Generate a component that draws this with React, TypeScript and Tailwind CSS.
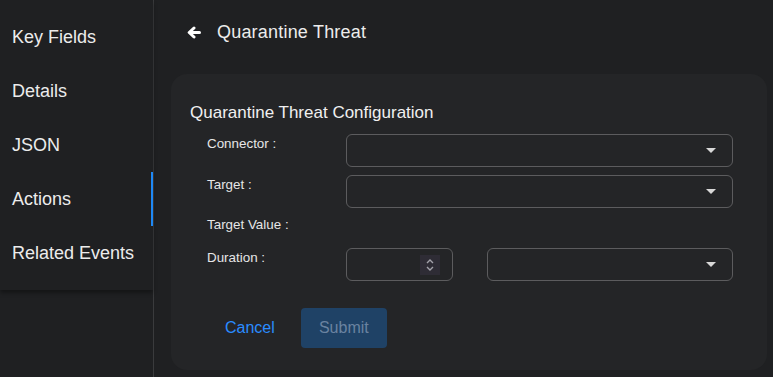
import React from "react";

const navItems = ["Key Fields", "Details", "JSON", "Actions", "Related Events"];

function BackArrow() {
  return (
    <svg width="14" height="13" viewBox="0 0 14 13" className="text-white">
      <path
        d="M7 2 L2.2 6.5 L7 11 M3 6.5 H12.5"
        fill="none"
        stroke="currentColor"
        strokeWidth="3"
        strokeLinecap="round"
        strokeLinejoin="round"
      />
    </svg>
  );
}

function Caret() {
  return (
    <svg width="10" height="5" viewBox="0 0 10 5" className="text-[#d8d8d8]">
      <polygon points="0,0 10,0 5,5" fill="currentColor" />
    </svg>
  );
}

function SelectBox({ className }: { className: string }) {
  return (
    <div
      className={`flex h-[33px] items-center justify-end rounded-[6px] border border-[#5c5c5e] pr-[16px] ${className}`}
    >
      <Caret />
    </div>
  );
}

function Spinner() {
  return (
    <div className="flex h-[20px] w-[20px] flex-col items-center justify-center gap-[2px] bg-[#2e2c35]">
      <svg width="8" height="5" viewBox="0 0 8 5">
        <polyline points="1,4 4,1 7,4" fill="none" stroke="#a3a2aa" strokeWidth="1.4" />
      </svg>
      <svg width="8" height="5" viewBox="0 0 8 5">
        <polyline points="1,1 4,4 7,1" fill="none" stroke="#a3a2aa" strokeWidth="1.4" />
      </svg>
    </div>
  );
}

export default function App() {
  return (
    <div className="flex h-[377px] w-[773px] overflow-hidden bg-[#1f2022] font-['Liberation_Sans',Arial,sans-serif] text-[#ececec]">
      {/* Sidebar */}
      <div className="w-[154px] shrink-0 border-r border-[#3a3b3d]">
        <div className="py-[10px] shadow-[0_3px_4px_rgba(0,0,0,0.35)]">
          {navItems.map((item) => (
            <div
              key={item}
              className={`flex h-[54px] items-center pl-[12px] text-[18px] ${
                item === "Actions" ? "border-r-2 border-[#1e88f5]" : ""
              }`}
            >
              {item}
            </div>
          ))}
        </div>
      </div>

      {/* Main */}
      <div className="flex flex-1 flex-col">
        <div className="flex h-[74px] items-center gap-[16px] pb-[10px] pl-[33px] text-[18px]">
          <BackArrow />
          <span className="tracking-[0.2px]">Quarantine Threat</span>
        </div>

        <div className="ml-[17px] mr-[6px] h-[296px] rounded-[16px] bg-[#242527] pl-[19px] pt-[29px]">
          <div className="text-[17px] leading-[20px] text-[#f0f0f0]">
            Quarantine Threat Configuration
          </div>

          <div className="mt-[11px] flex flex-col gap-[8px] pl-[17px] text-[13.4px] leading-[16px] text-[#e6e6e6]">
            <div className="flex">
              <div className="w-[139px] pt-[2px]">Connector :</div>
              <SelectBox className="w-[387px]" />
            </div>
            <div className="flex">
              <div className="w-[139px] pt-[2px]">Target :</div>
              <SelectBox className="w-[387px]" />
            </div>
            <div className="flex h-[24px]">
              <div className="w-[139px] pt-[1px]">Target Value :</div>
            </div>
            <div className="flex">
              <div className="w-[139px] pt-[2px]">Duration :</div>
              <div className="flex h-[33px] w-[107px] items-center justify-end rounded-[6px] border border-[#5c5c5e] pr-[12px]">
                <Spinner />
              </div>
              <SelectBox className="ml-[34px] w-[246px]" />
            </div>
          </div>

          <div className="mt-[27px] flex items-center gap-[10px] pl-[19px]">
            <button className="h-[40px] px-[16px] text-[16px] text-[#2a8cff]">Cancel</button>
            <button className="h-[40px] w-[86px] rounded-[4px] bg-[#1f4266] text-[16px] text-[#6a83a0]">
              Submit
            </button>
          </div>
        </div>
      </div>
    </div>
  );
}
